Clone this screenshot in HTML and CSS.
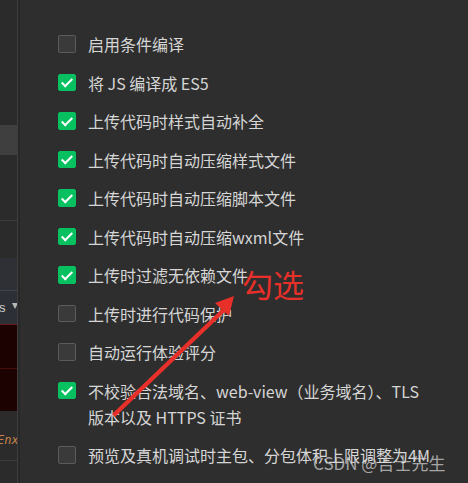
FILE: index.html
```html
<!DOCTYPE html>
<html lang="zh-CN">
<head>
  <meta charset="UTF-8">
  <title>编译设置</title>
  <link rel="stylesheet" href="styles.css">
</head>
<body>
  <div class="page">
    <!-- left editor strip, mostly hidden behind the dialog -->
    <div class="side">
      <div class="seg seg-top"></div>
      <div class="seg seg-tab"></div>
      <div class="seg seg-a"></div>
      <div class="seg seg-b"></div>
      <div class="seg seg-c"></div>
      <div class="seg seg-d"><span class="s">s</span><span class="caret"></span></div>
      <div class="seg seg-red"></div>
      <div class="seg seg-red2"></div>
      <div class="seg seg-code"><span class="code">Enx</span></div>
      <div class="seg seg-end"></div>
    </div>

    <!-- settings panel -->
    <div class="panel">
      <ul class="options">
        <li class="option"><span class="box"></span><span class="label">启用条件编译</span></li>
        <li class="option"><span class="box checked"></span><span class="label">将 JS 编译成 ES5</span></li>
        <li class="option"><span class="box checked"></span><span class="label">上传代码时样式自动补全</span></li>
        <li class="option"><span class="box checked"></span><span class="label">上传代码时自动压缩样式文件</span></li>
        <li class="option"><span class="box checked"></span><span class="label">上传代码时自动压缩脚本文件</span></li>
        <li class="option"><span class="box checked"></span><span class="label">上传代码时自动压缩wxml文件</span></li>
        <li class="option"><span class="box checked"></span><span class="label">上传时过滤无依赖文件</span></li>
        <li class="option"><span class="box"></span><span class="label">上传时进行代码保护</span></li>
        <li class="option"><span class="box"></span><span class="label">自动运行体验评分</span></li>
        <li class="option"><span class="box checked"></span><span class="label">不校验合法域名、web-view（业务域名）、TLS<br>版本以及 HTTPS 证书</span></li>
        <li class="option"><span class="box"></span><span class="label">预览及真机调试时主包、分包体积上限调整为4M</span></li>
      </ul>
    </div>
  </div>

  <!-- red annotation drawn over the screenshot -->
  <div class="note">勾选</div>
  <svg class="arrow" width="468" height="483" viewBox="0 0 468 483">
    <polygon points="112,414 226,305 229,308 115,417" fill="#e8302a"/>
    <polygon points="234,296 215,303 229,316" fill="#e8302a"/>
  </svg>

  <div class="mark">CSDN @吉士先生</div>
</body>
</html>
```

FILE: styles.css
```css
/* page frame */
body {
  margin: 0;
  background: #2e2e2e;
  font-family: "Noto Sans CJK SC", "Noto Sans", sans-serif;
  overflow: hidden;
}
.page {
  display: flex;
  width: 468px;
  height: 483px;
}

/* left strip */
.side {
  width: 17px;
  flex: none;
  border-right: 1px solid #3e3e3e;
  overflow: hidden;
  background: #2b2b2b;
}
.seg {
  box-sizing: border-box;
  position: relative;
}
.seg-top { height: 125px; }
.seg-tab { height: 30px; background: #3f3f3f; }
.seg-a { height: 66px; border-bottom: 1px solid #3c3c3c; }
.seg-b { height: 37px; }
.seg-c { height: 33px; background: #2e3035; border-bottom: 1px solid #40434a; }
.seg-d {
  height: 34px;
  background: #2c2f35;
  border-bottom: 1px solid #6a1a1a;
  display: flex;
  align-items: center;
  font-family: "Liberation Sans", sans-serif;
  font-size: 13px;
  color: #cfcfcf;
}
.s { margin-left: -1px; }
.caret {
  margin-left: 6px;
  margin-top: -4px;
  border-left: 3px solid transparent;
  border-right: 3px solid transparent;
  border-top: 6px solid #b8b8b8;
}
.seg-red { height: 44px; background: #1d0202; border-bottom: 1px solid #4a0b0b; }
.seg-red2 { height: 42px; background: #1d0202; }
.seg-code {
  height: 50px;
  display: flex;
  align-items: center;
  border-bottom: 1px solid #3c3c3c;
}
.code {
  margin-left: -3px;
  margin-top: 8px;
  font-family: "DejaVu Sans Mono", monospace;
  font-style: italic;
  font-size: 12px;
  color: #c9824a;
}
.seg-end { height: 30px; }

/* settings panel */
.panel {
  flex: 1;
  padding: 31px 0 0 38px;
  border-left: 2px solid #282828;
}
.options {
  list-style: none;
  margin: 0;
  padding: 0;
}
.option {
  display: flex;
  align-items: flex-start;
  gap: 12.5px;
  margin-bottom: 12.5px;
}
.box {
  flex: none;
  box-sizing: border-box;
  width: 17.5px;
  height: 17.5px;
  margin-top: 4.25px;
  border: 1px solid #5b5b5b;
  border-radius: 2px;
  background: #3a3a3a;
  position: relative;
}
.box.checked {
  border-color: #07c160;
  background: #07c160;
}
.box.checked::after {
  content: "";
  position: absolute;
  left: 5px;
  top: 1.5px;
  width: 4px;
  height: 9px;
  border-right: 2px solid #fff;
  border-bottom: 2px solid #fff;
  transform: rotate(45deg);
}
.label {
  font-size: 16px;
  line-height: 26px;
  color: #d6d6d6;
  white-space: nowrap;
}

/* annotation overlays */
.note {
  position: absolute;
  left: 242px;
  top: 264px;
  font-size: 31px;
  line-height: 40px;
  color: #e8302a;
}
.arrow {
  position: absolute;
  left: 0;
  top: 0;
}
.mark {
  position: absolute;
  left: 313px;
  top: 450px;
  font-size: 17px;
  line-height: 26px;
  color: rgba(220, 220, 220, 0.7);
}
```
